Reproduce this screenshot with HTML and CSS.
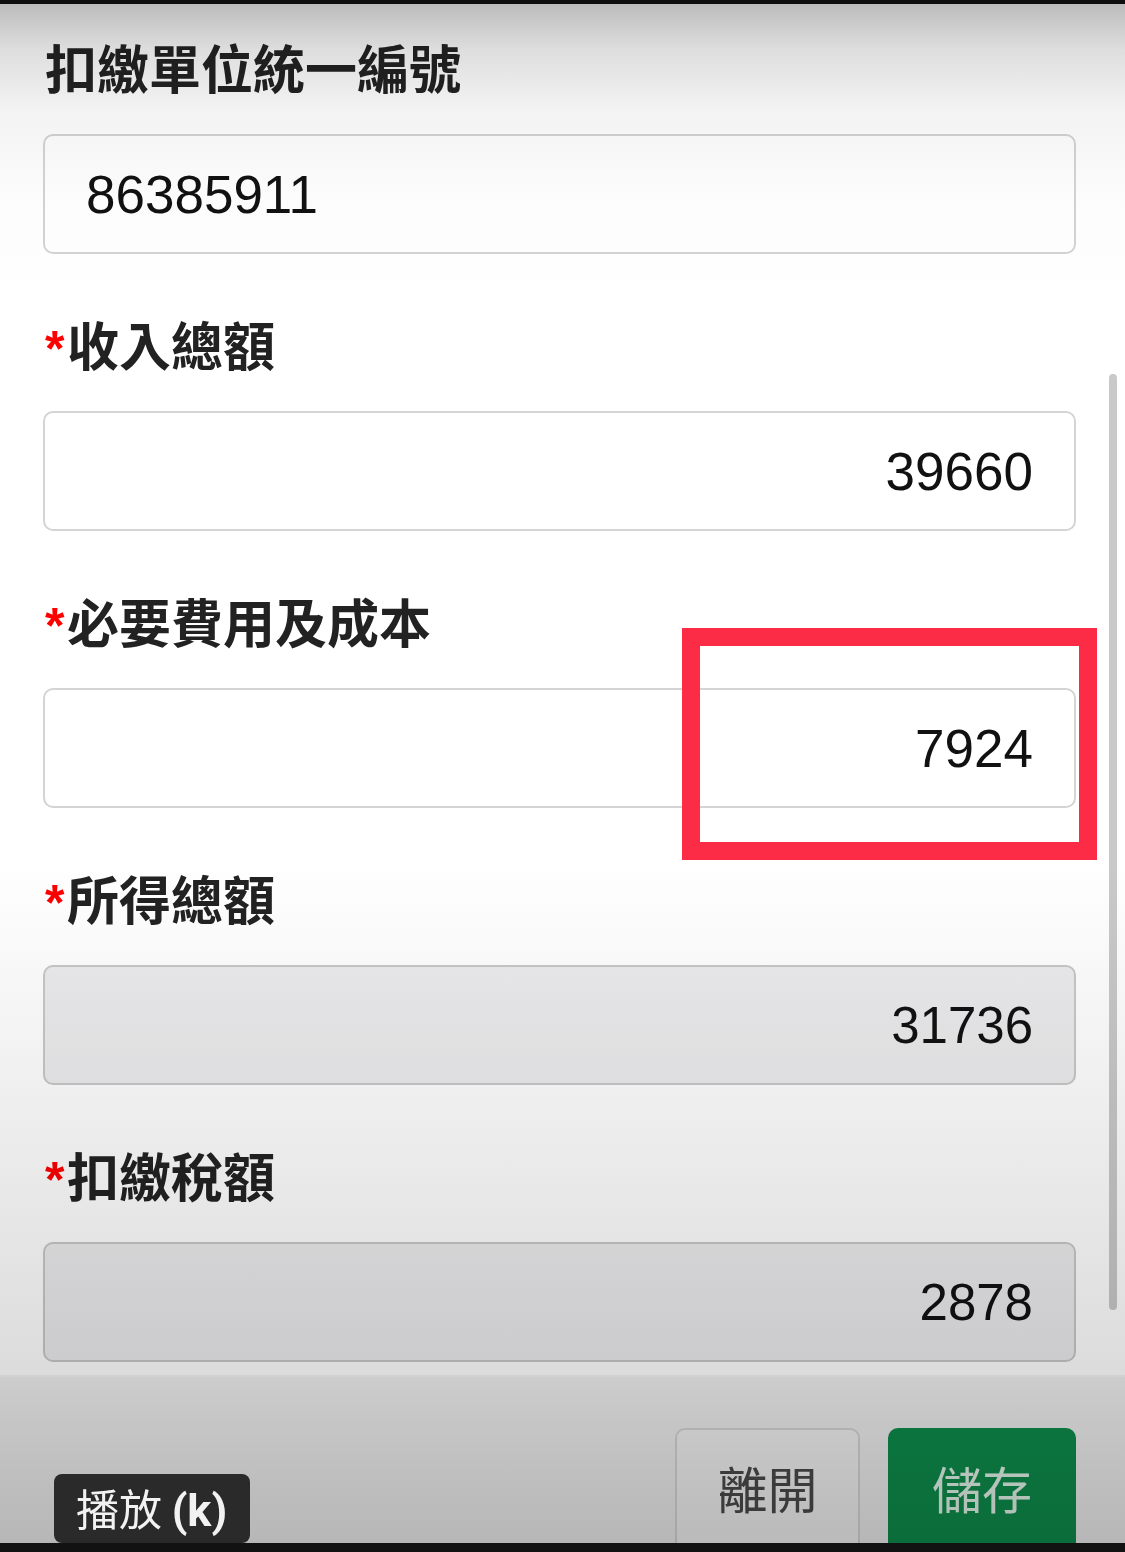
FILE: index.html
```html
<!DOCTYPE html>
<html lang="zh-Hant">
<head>
<meta charset="utf-8">
<title>扣繳資料</title>
<link rel="stylesheet" href="styles.css">
</head>
<body>
<div class="screen">
  <div class="bar-top"></div>
  <main class="form">
    <div class="field">
      <label class="label">扣繳單位統一編號</label>
      <div class="input input-left">86385911</div>
    </div>
    <div class="field">
      <label class="label"><span class="req">*</span>收入總額</label>
      <div class="input">39660</div>
    </div>
    <div class="field">
      <label class="label"><span class="req">*</span>必要費用及成本</label>
      <div class="input">7924</div>
    </div>
    <div class="field">
      <label class="label"><span class="req">*</span>所得總額</label>
      <div class="input input-disabled">31736</div>
    </div>
    <div class="field">
      <label class="label"><span class="req">*</span>扣繳稅額</label>
      <div class="input input-disabled">2878</div>
    </div>
  </main>
  <footer class="actions">
    <button class="btn btn-leave">離開</button>
    <button class="btn btn-save">儲存</button>
  </footer>
  <div class="bar-bottom"></div>
  <div class="scrollbar"></div>
  <div class="vignette"></div>
  <div class="highlight"></div>
  <div class="tooltip">播放 <b>(k)</b></div>
</div>
</body>
</html>
```

FILE: styles.css
```css
html, body {
  margin: 0;
  padding: 0;
  background: #111;
}

.screen {
  position: relative;
  width: 1125px;
  height: 1552px;
  overflow: hidden;
  display: flex;
  flex-direction: column;
  background: #fff;
  font-family: "Noto Sans CJK TC", "Noto Sans", sans-serif;
}

.bar-top {
  height: 4px;
  flex: none;
  background: #121212;
}

.bar-bottom {
  height: 9px;
  flex: none;
  background: #121212;
  position: relative;
  z-index: 3;
}

.form {
  flex: 1;
  min-height: 0;
  padding: 33px 49px 0 43px;
  display: flex;
  flex-direction: column;
  gap: 60px;
}

.field {
  display: flex;
  flex-direction: column;
}

.label {
  display: block;
  height: 60px;
  line-height: 60px;
  margin-bottom: 37px;
  font-size: 52px;
  font-weight: 700;
  color: #222;
  white-space: nowrap;
  padding-left: 2px;
}

.req {
  display: inline-block;
  width: 22px;
  color: #f00;
  font-family: "Liberation Sans", Arial, sans-serif;
  font-size: 50px;
  font-weight: 700;
  vertical-align: top;
  line-height: 70px;
}

.input {
  box-sizing: border-box;
  height: 120px;
  flex: none;
  border: 2px solid #d4d4d4;
  border-radius: 10px;
  background: #fff;
  padding: 0 41px;
  display: flex;
  align-items: center;
  justify-content: flex-end;
  font-family: "Liberation Sans", Arial, sans-serif;
  font-size: 53px;
  color: #111;
}

.input-left {
  justify-content: flex-start;
}

.input-disabled {
  background: #ececee;
  border-color: #c8c8c8;
  font-size: 51px;
}

.actions {
  flex: none;
  box-sizing: border-box;
  height: 168px;
  border-top: 2px solid #f4f4f4;
  background: #efefef;
  display: flex;
  justify-content: flex-end;
  align-items: flex-start;
  gap: 28px;
  padding: 51px 49px 0 0;
  overflow: hidden;
}

.btn {
  flex: none;
  box-sizing: border-box;
  height: 130px;
  margin: 0;
  border-radius: 10px;
  font-family: "Noto Sans CJK TC", "Noto Sans", sans-serif;
  font-size: 50px;
  line-height: 86px;
  padding: 0 0 12px;
  text-align: center;
  display: block;
  cursor: pointer;
}

.btn-leave {
  width: 185px;
  border: 2px solid #d6d6d6;
  background: #f3f3f3;
  color: #4a4a4a;
}

.btn-save {
  width: 188px;
  border: 2px solid #0d8d4b;
  background: #0d8d4b;
  color: #e3f7ea;
}

.scrollbar {
  position: absolute;
  left: 1109px;
  top: 374px;
  width: 8px;
  height: 936px;
  border-radius: 4px;
  background: #c9c9c9;
}

.vignette {
  position: absolute;
  inset: 0;
  pointer-events: none;
  mix-blend-mode: multiply;
  background: linear-gradient(to bottom,
    #bcbcbc 4px,
    #dedede 50px,
    #f3f3f3 110px,
    #fcfcfc 200px,
    #ffffff 300px,
    #ffffff 860px,
    #f7f7f7 980px,
    #ebebeb 1150px,
    #dcdcdc 1370px,
    #cfcfcf 1450px,
    #c4c4c4 1543px);
  z-index: 2;
}

.highlight {
  position: absolute;
  left: 682px;
  top: 628px;
  width: 415px;
  height: 232px;
  box-sizing: border-box;
  border: 18px solid #fc2c47;
  z-index: 4;
}

.tooltip {
  position: absolute;
  left: 54px;
  top: 1474px;
  width: 196px;
  height: 69px;
  box-sizing: border-box;
  padding-left: 22px;
  border-radius: 8px;
  background: #2a2a2a;
  color: #f2f2f2;
  font-family: "Noto Sans CJK TC", "Noto Sans", sans-serif;
  font-size: 43px;
  line-height: 66px;
  white-space: nowrap;
  z-index: 4;
}

.tooltip b {
  font-family: "Roboto", "Liberation Sans", sans-serif;
  font-weight: 700;
  font-size: 45px;
}
```
